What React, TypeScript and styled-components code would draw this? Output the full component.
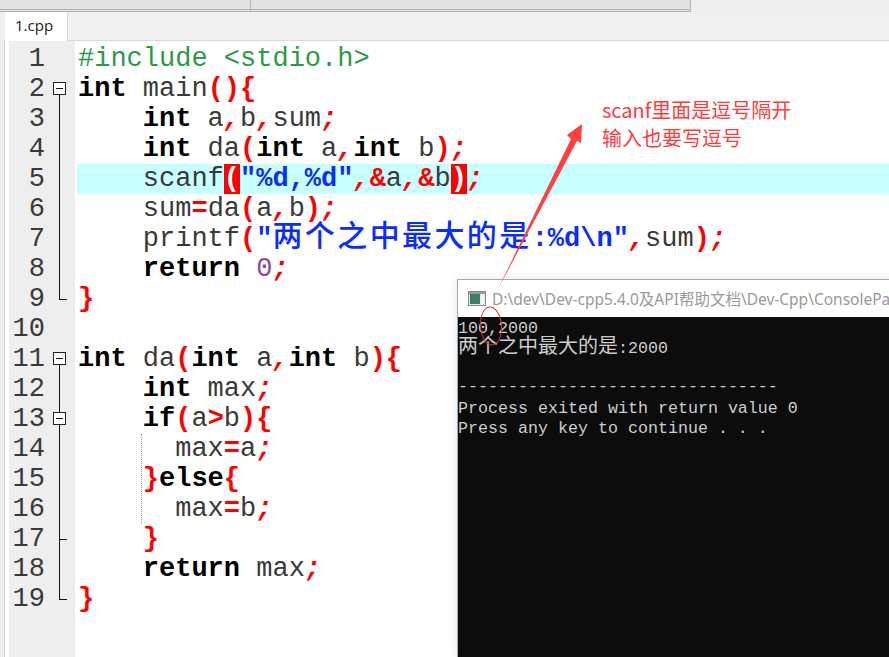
import React from 'react'
import styled, { createGlobalStyle } from 'styled-components'

const GlobalStyle = createGlobalStyle`
  html, body { margin: 0; padding: 0; background: #fff; }
  #root { height: 657px; overflow: hidden; }
`

const Page = styled.div`
  position: relative;
  width: 889px;
  height: 657px;
  overflow: hidden;
  display: flex;
  flex-direction: column;
  background: #fff;
`
const TopBar = styled.div`
  display: flex;
  height: 12px;
  flex: none;
  background: #efefef;
`
const TopPanel = styled.div<{ $w: number }>`
  width: ${p => p.$w}px;
  flex: none;
  box-sizing: border-box;
  background: #e1e1e1;
  border-right: 1px solid #b4b4b4;
  border-bottom: 3px double #b4b4b4;
`
const TabStrip = styled.div`
  display: flex;
  height: 28px;
  flex: none;
  padding-left: 5px;
  background: #f0f0f0;
  border-bottom: 1px solid #d9d9d9;
`
const Tab = styled.div`
  width: 63px;
  height: 29px;
  box-sizing: border-box;
  padding: 3px 0 0 10px;
  background: #fff;
  border-right: 1px solid #d9d9d9;
  font: 15px/20px 'Open Sans', 'Liberation Sans', sans-serif;
  color: #222;
`
const Editor = styled.div`
  flex: 1;
  display: flex;
  min-height: 0;
  padding-top: 3px;
  padding-left: 9px;
  background: #fff;
  font: 27px/30px 'Liberation Mono', monospace;
  color: #3a3a3a;
`
const SideEdge = styled.div`
  position: absolute;
  left: 0;
  top: 40px;
  bottom: 0;
  width: 4px;
  background: #eee;
  border-right: 1px solid #d4d4d4;
`
const Gutter = styled.div`
  width: 66px;
  flex: none;
  margin-top: -3px;
  padding-top: 3px;
  background: #eee;
`
const GutterRow = styled.div`
  display: flex;
  height: 30px;
`
const LineNo = styled.div`
  width: 36px;
  flex: none;
  text-align: right;
  color: #3a3a3a;
`
const FoldCell = styled.div`
  position: relative;
  width: 30px;
  flex: none;
`
const FoldLine = styled.div<{ $from?: number; $to?: number }>`
  position: absolute;
  left: 14px;
  top: ${p => p.$from ?? 0}px;
  width: 1px;
  height: ${p => (p.$to ?? 30) - (p.$from ?? 0)}px;
  background: #111;
`
const FoldTick = styled.div`
  position: absolute;
  left: 14px;
  top: 15px;
  width: 8px;
  height: 1px;
  background: #111;
`
const FoldBox = styled.div`
  position: absolute;
  left: 8px;
  top: 8px;
  width: 13px;
  height: 13px;
  box-sizing: border-box;
  border: 1px solid #222;
  background: #fff;
  &::after {
    content: '';
    position: absolute;
    left: 2px;
    right: 2px;
    top: 5px;
    height: 1px;
    background: #111;
  }
`
const Code = styled.div`
  position: relative;
  flex: 1;
  padding-left: 2px;
  min-width: 0;
`
const Line = styled.div<{ $active?: boolean }>`
  height: 30px;
  padding-left: 1px;
  white-space: pre;
  background: ${p => (p.$active ? '#c8ffff' : 'transparent')};
`
const Kw = styled.span`
  font-weight: 700;
  color: #000;
`
const Sym = styled.span`
  font-weight: 700;
  color: #f00;
`
const Punct = styled.span`
  font-weight: 700;
  font-style: italic;
  color: #f00;
`
const Match = styled.span`
  font-weight: 700;
  color: #fff;
  background: #f00;
`
const Str = styled.span`
  font-weight: 700;
  color: #0a2cff;
`
const StrCjk = styled.span`
  font-family: 'Noto Sans CJK SC', sans-serif;
  font-size: 30px;
  font-weight: 500;
  line-height: 0;
  letter-spacing: 2.4px;
`
const Num = styled.span`
  color: #8a4a9a;
`
const Pre = styled.span`
  color: #2a9a4a;
`
const IndentGuide = styled.div`
  position: absolute;
  left: 66px;
  top: 390px;
  height: 90px;
  border-left: 1px dotted #999;
`

const Annotation = styled.div`
  position: absolute;
  left: 602px;
  top: 96px;
  font: 20px/28px 'Noto Sans CJK SC', 'Open Sans', sans-serif;
  color: #ff3b3b;
`
const Overlay = styled.svg`
  position: absolute;
  left: 0;
  top: 0;
  z-index: 3;
  pointer-events: none;
`
const ConsoleWindow = styled.div`
  position: absolute;
  left: 457px;
  top: 279px;
  width: 440px;
  bottom: 0;
  z-index: 2;
  display: flex;
  flex-direction: column;
  background: #0c0c0c;
  border: 1px solid #a8a8a8;
  border-bottom: 0;
  box-shadow: 0 0 10px rgba(0, 0, 0, 0.1);
`
const ConsoleTitle = styled.div`
  display: flex;
  align-items: center;
  gap: 6px;
  height: 37px;
  flex: none;
  padding-left: 10px;
  background: #fff;
  overflow: hidden;
  white-space: nowrap;
  font: 15.5px/20px 'Noto Sans', 'Noto Sans CJK SC', sans-serif;
  color: #999;
`
const ConsoleBody = styled.div`
  padding-top: 2px;
  font: 16.67px/20px 'Liberation Mono', monospace;
  color: #ccc;
  white-space: pre;
`
const ConsoleLine = styled.div<{ $rule?: boolean }>`
  height: 20px;
  line-height: ${p => (p.$rule ? '16px' : '20px')};
`
const ConsoleCjk = styled.span`
  font-family: 'Noto Sans CJK SC', sans-serif;
  font-size: 20px;
  line-height: 0;
`

const ConsoleIcon = () => (
  <svg width="18" height="15" viewBox="0 0 18 15" style={{ flex: 'none' }}>
    <rect x="0.5" y="0.5" width="17" height="14" fill="#e8e8e8" stroke="#8a8a8a" />
    <rect x="1" y="1" width="16" height="2" fill="#9a9a9a" />
    <rect x="2" y="3" width="10" height="10" fill="#3a7d6a" />
    <rect x="13" y="3" width="3" height="10" fill="#f4f4f4" />
  </svg>
)

type Fold = 'start' | 'open' | 'line' | 'tick' | 'end' | undefined

const folds: Fold[] = [
  undefined,
  'start',
  'line',
  'line',
  'line',
  'line',
  'line',
  'line',
  'end',
  undefined,
  'start',
  'line',
  'open',
  'line',
  'line',
  'line',
  'tick',
  'line',
  'end'
]

const renderFold = (fold: Fold) => {
  switch (fold) {
    case 'start':
      return (
        <>
          <FoldLine $from={15} />
          <FoldBox />
        </>
      )
    case 'open':
      return (
        <>
          <FoldLine />
          <FoldBox />
        </>
      )
    case 'line':
      return <FoldLine />
    case 'tick':
      return (
        <>
          <FoldLine />
          <FoldTick />
        </>
      )
    case 'end':
      return (
        <>
          <FoldLine $to={15} />
          <FoldTick />
        </>
      )
    default:
      return null
  }
}

const App: React.FC = () => {
  return (
    <Page>
      <GlobalStyle />
      <TopBar>
        <TopPanel $w={251} />
        <TopPanel $w={440} />
      </TopBar>
      <TabStrip>
        <Tab>1.cpp</Tab>
      </TabStrip>
      <SideEdge />
      <Editor>
        <Gutter>
          {folds.map((fold, index) => (
            <GutterRow key={index}>
              <LineNo>{index + 1}</LineNo>
              <FoldCell>{renderFold(fold)}</FoldCell>
            </GutterRow>
          ))}
        </Gutter>
        <Code>
          <Line>
            <Pre>{'#include <stdio.h>'}</Pre>
          </Line>
          <Line>
            <Kw>int</Kw> main<Sym>(){'{'}</Sym>
          </Line>
          <Line>
            {'    '}<Kw>int</Kw> a<Punct>,</Punct>b<Punct>,</Punct>sum<Punct>;</Punct>
          </Line>
          <Line>
            {'    '}<Kw>int</Kw> da<Sym>(</Sym><Kw>int</Kw> a<Punct>,</Punct><Kw>int</Kw> b<Sym>)</Sym><Punct>;</Punct>
          </Line>
          <Line $active>
            {'    '}scanf<Match>(</Match><Str>"%d,%d"</Str><Punct>,</Punct><Sym>&amp;</Sym>a<Punct>,</Punct><Sym>&amp;</Sym>b<Match>)</Match><Punct>;</Punct>
          </Line>
          <Line>
            {'    '}sum<Sym>=</Sym>da<Sym>(</Sym>a<Punct>,</Punct>b<Sym>)</Sym><Punct>;</Punct>
          </Line>
          <Line>
            {'    '}printf<Sym>(</Sym><Str>"<StrCjk>两个之中最大的是</StrCjk>:%d\n"</Str><Punct>,</Punct>sum<Sym>)</Sym><Punct>;</Punct>
          </Line>
          <Line>
            {'    '}<Kw>return</Kw> <Num>0</Num><Punct>;</Punct>
          </Line>
          <Line>
            <Sym>{'}'}</Sym>
          </Line>
          <Line />
          <Line>
            <Kw>int</Kw> da<Sym>(</Sym><Kw>int</Kw> a<Punct>,</Punct><Kw>int</Kw> b<Sym>){'{'}</Sym>
          </Line>
          <Line>
            {'    '}<Kw>int</Kw> max<Punct>;</Punct>
          </Line>
          <Line>
            {'    '}<Kw>if</Kw><Sym>(</Sym>a<Sym>&gt;</Sym>b<Sym>){'{'}</Sym>
          </Line>
          <Line>
            {'      '}max<Sym>=</Sym>a<Punct>;</Punct>
          </Line>
          <Line>
            {'    '}<Sym>{'}'}</Sym><Kw>else</Kw><Sym>{'{'}</Sym>
          </Line>
          <Line>
            {'      '}max<Sym>=</Sym>b<Punct>;</Punct>
          </Line>
          <Line>
            {'    '}<Sym>{'}'}</Sym>
          </Line>
          <Line>
            {'    '}<Kw>return</Kw> max<Punct>;</Punct>
          </Line>
          <Line>
            <Sym>{'}'}</Sym>
          </Line>
          <IndentGuide />
        </Code>
      </Editor>

      <Annotation>
        scanf里面是逗号隔开
        <br />
        输入也要写逗号
      </Annotation>

      <ConsoleWindow>
        <ConsoleTitle>
          <ConsoleIcon />
          D:\dev\Dev-cpp5.4.0及API帮助文档\Dev-Cpp\ConsolePa
        </ConsoleTitle>
        <ConsoleBody>
          <ConsoleLine>100,2000</ConsoleLine>
          <ConsoleLine>
            <ConsoleCjk>两个之中最大的是</ConsoleCjk>:2000
          </ConsoleLine>
          <ConsoleLine />
          <ConsoleLine $rule>--------------------------------</ConsoleLine>
          <ConsoleLine>Process exited with return value 0</ConsoleLine>
          <ConsoleLine>Press any key to continue . . .</ConsoleLine>
        </ConsoleBody>
      </ConsoleWindow>

      <Overlay width="889" height="657" viewBox="0 0 889 657">
        <polygon
          points="498,289 571,139 567,135 582,124 581,143 577,141"
          fill="#ff4040"
        />
        <ellipse
          cx="491"
          cy="326"
          rx="10.5"
          ry="19"
          fill="none"
          stroke="#e53030"
          strokeWidth="1"
          transform="rotate(-4 491 326)"
        />
      </Overlay>
    </Page>
  )
}

export default App
